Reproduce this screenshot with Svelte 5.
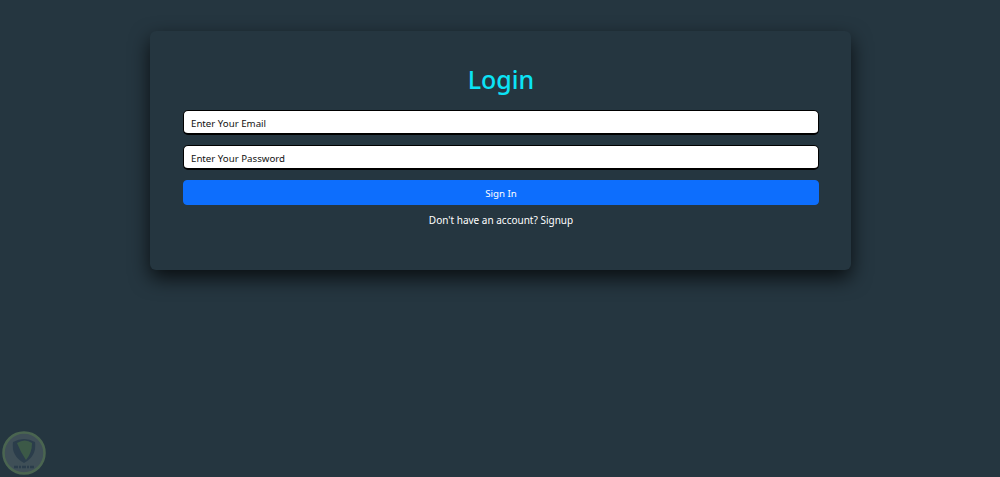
<script>
  let email = "";
  let password = "";
</script>

<div class="page">
  <form class="card" on:submit|preventDefault>
    <h1>Login</h1>
    <input type="email" placeholder="Enter Your Email" bind:value={email} />
    <input type="password" placeholder="Enter Your Password" bind:value={password} />
    <button type="submit">Sign In</button>
    <p>Don't have an account? <a href="#signup">Signup</a></p>
  </form>

  <svg class="badge" width="48" height="48" viewBox="0 0 48 48" aria-hidden="true">
    <circle cx="23" cy="24" r="20.5" fill="#4a5a62" stroke="#5b7a58" stroke-width="2.5" />
    <path d="M12 13 Q23 7 34 13 Q36 27 23 34 Q10 27 12 13Z" fill="#2e4150" />
    <path d="M16 14 Q24 9 31 14 Q31 24 25 31 Q20 24 16 14Z" fill="#46694a" />
    <path d="M13 38h20" stroke="#2e4150" stroke-width="2.5" stroke-dasharray="4 1 2 1" />
  </svg>
</div>

<style>
  :global(body) {
    background: #253640;
    font-family: "Noto Sans", "Open Sans", sans-serif;
  }

  .page {
    height: 477px;
    padding-top: 31px;
    box-sizing: border-box;
    position: relative;
    overflow: hidden;
  }

  .card {
    width: 701px;
    height: 239px;
    margin-left: 150px;
    padding: 33px 32px 0 33px;
    box-sizing: border-box;
    display: flex;
    flex-direction: column;
    gap: 10px;
    background: #253640;
    border-radius: 6px;
    box-shadow: 0 8px 20px rgba(0, 0, 0, 0.75);
  }

  h1 {
    margin: 0 0 2px;
    height: 34px;
    line-height: 30px;
    font-size: 25px;
    font-weight: 500;
    text-align: center;
    color: #0be3f5;
  }

  input {
    height: 25px;
    box-sizing: border-box;
    padding: 2px 7px 0;
    border: 1px solid #000;
    border-bottom-width: 2px;
    border-radius: 5px;
    background: #fff;
    font: 9.7px "Noto Sans", "Open Sans", sans-serif;
    outline: none;
  }

  input::placeholder {
    color: #111;
    opacity: 1;
  }

  button {
    height: 25px;
    padding: 2px 0 0;
    border: 1px solid #0d6efd;
    border-radius: 4px;
    background: #0d6efd;
    color: #fff;
    font: 9.7px "Noto Sans", "Open Sans", sans-serif;
  }

  p {
    margin: -2px 0 0;
    text-align: center;
    font-size: 10px;
    line-height: 14px;
    color: #fff;
  }

  a {
    color: #fff;
    text-decoration: none;
  }

  .badge {
    position: absolute;
    left: 1px;
    bottom: 0;
    opacity: 0.7;
    filter: blur(0.6px);
  }
</style>
